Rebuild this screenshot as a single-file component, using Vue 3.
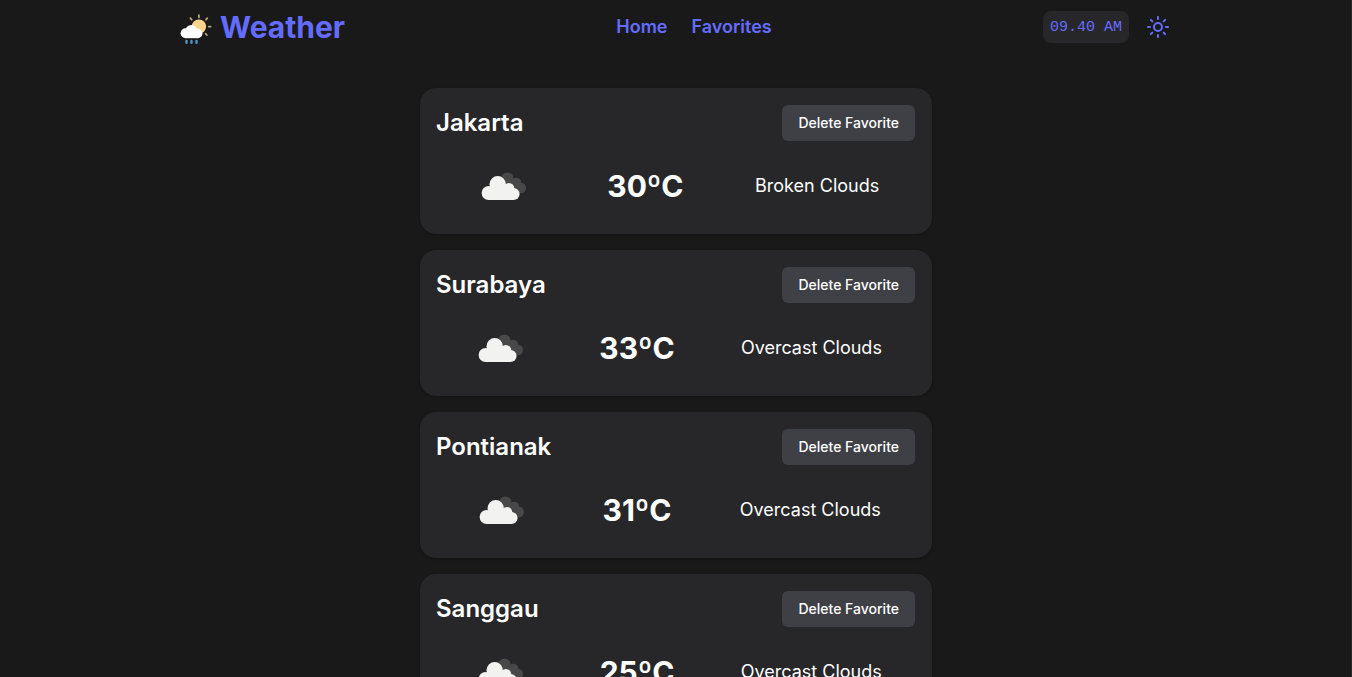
<script setup>
import { ref } from 'vue'

const time = '09.40 AM'

const favorites = ref([
  { city: 'Jakarta', temp: 30, description: 'Broken Clouds' },
  { city: 'Surabaya', temp: 33, description: 'Overcast Clouds' },
  { city: 'Pontianak', temp: 31, description: 'Overcast Clouds' },
  { city: 'Sanggau', temp: 25, description: 'Overcast Clouds' },
])

function removeFavorite(city) {
  favorites.value = favorites.value.filter((item) => item.city !== city)
}
</script>

<template>
  <div class="page">
    <header class="header">
      <a class="brand" href="#">
        <svg class="brand-icon" viewBox="0 0 32 32" aria-hidden="true">
          <path
            d="M18.900 4.200v2.200M10.400 7.200l1.300 1.500M27.300 7.200l-1.300 1.500M28.800 15.600h1.800M25.600 22.600l1.300 1.400"
            stroke="#b5a47c"
            stroke-width="1.800"
            stroke-linecap="round"
          />
          <circle cx="18.900" cy="15.600" r="7.200" fill="#fbd38a" />
          <g fill="#ffffff">
            <circle cx="5.600" cy="22.200" r="5" />
            <circle cx="11.400" cy="20.200" r="6.200" />
            <circle cx="17.800" cy="22.500" r="4.700" />
            <rect x="5.400" y="21" width="12.600" height="6.200" />
          </g>
          <path
            d="M6.500 30v1.700M11.500 30v1.700M16.500 30v1.700"
            stroke="#4f97c8"
            stroke-width="2.400"
            stroke-linecap="round"
          />
        </svg>
        <span>Weather</span>
      </a>
      <nav class="nav">
        <a href="#home">Home</a>
        <a href="#favorites">Favorites</a>
      </nav>
      <div class="tools">
        <time class="clock">{{ time }}</time>
        <button class="theme" type="button" aria-label="Toggle theme">
          <svg viewBox="0 0 24 24" width="24" height="24" fill="none" stroke="currentColor" stroke-width="2" stroke-linecap="round">
            <circle cx="12" cy="12" r="4" />
            <path d="M12 2v2M12 20v2M4.93 4.93l1.41 1.41M17.66 17.66l1.41 1.41M2 12h2M20 12h2M6.34 17.66l-1.41 1.41M19.07 4.93l-1.41 1.41" />
          </svg>
        </button>
      </div>
    </header>

    <main class="list">
      <article v-for="item in favorites" :key="item.city" class="card">
        <div class="card-head">
          <h2>{{ item.city }}</h2>
          <button class="delete" type="button" @click="removeFavorite(item.city)">Delete Favorite</button>
        </div>
        <div class="card-body">
          <svg class="cloud" viewBox="0 0 64 62" role="img" :aria-label="item.description">
            <g fill="#484849">
              <circle cx="35.400" cy="23.800" r="6.300" />
              <circle cx="44.400" cy="27.600" r="4.800" />
              <circle cx="48.900" cy="33" r="5.200" />
              <path d="M33.400 25h11l4 13h-15z" />
            </g>
            <g fill="#f2f2f0">
              <circle cx="16.600" cy="38" r="7" />
              <circle cx="25.700" cy="29.300" r="8.200" />
              <circle cx="36.900" cy="33.400" r="5.400" />
              <circle cx="41.600" cy="39" r="6" />
              <rect x="16.400" y="32" width="25.200" height="13" />
            </g>
          </svg>
          <p class="temp">{{ item.temp }}ºC</p>
          <p class="description">{{ item.description }}</p>
        </div>
      </article>
    </main>
  </div>
</template>

<style>
body {
  background: #191919;
}
</style>

<style scoped>
.page {
  height: 100vh;
  overflow: hidden;
  font-family: Inter, 'Open Sans', sans-serif;
  color: #ffffff;
  background: #191919;
  box-shadow: inset -1px 0 #2a2a2c;
}

.header {
  display: flex;
  align-items: center;
  justify-content: space-between;
  box-sizing: border-box;
  max-width: 1024px;
  height: 56px;
  margin: 0 auto;
  padding: 0 16px 2px;
  color: #646cff;
}

.brand {
  display: flex;
  align-items: center;
  gap: 8px;
  color: inherit;
  text-decoration: none;
  font-size: 30px;
  line-height: 36px;
  font-weight: 700;
}

.brand-icon {
  width: 32px;
  height: 32px;
  overflow: visible;
}

.nav {
  display: flex;
  gap: 24px;
  font-size: 18px;
  line-height: 28px;
  font-weight: 600;
}

.nav a {
  color: inherit;
  text-decoration: none;
}

.tools {
  display: flex;
  align-items: center;
  gap: 15px;
}

.clock {
  padding: 5px 7px 3px;
  border-radius: 8px;
  background: #27272a;
  font-family: 'Liberation Mono', monospace;
  font-size: 15px;
  line-height: 24px;
}

.theme {
  display: flex;
  padding: 2px;
  border: 0;
  background: none;
  color: inherit;
  cursor: pointer;
}

.list {
  display: flex;
  flex-direction: column;
  gap: 16px;
  max-width: 512px;
  margin: 0 auto;
  padding: 32px 0;
}

.card {
  display: flex;
  flex-direction: column;
  gap: 14px;
  padding: 17px 17px 17px 16px;
  border-radius: 16px;
  background: #27272a;
  box-shadow: 0 1px 3px rgba(0, 0, 0, 0.3);
}

.card-head {
  display: flex;
  align-items: center;
  justify-content: space-between;
}

h2 {
  margin: 0;
  font-size: 24px;
  line-height: 32px;
  font-weight: 600;
}

.delete {
  height: 36px;
  padding: 0 16px;
  border: 0;
  border-radius: 6px;
  background: #3f3f46;
  color: inherit;
  font-family: inherit;
  font-size: 14px;
  line-height: 20px;
  font-weight: 500;
  cursor: pointer;
}

.card-body {
  display: flex;
  align-items: center;
  justify-content: space-around;
}

.cloud {
  width: 64px;
  height: 62px;
}

.temp,
.description {
  margin: 0;
}

.temp {
  font-size: 30px;
  line-height: 36px;
  font-weight: 700;
}

.description {
  font-size: 18px;
  line-height: 28px;
}
</style>
